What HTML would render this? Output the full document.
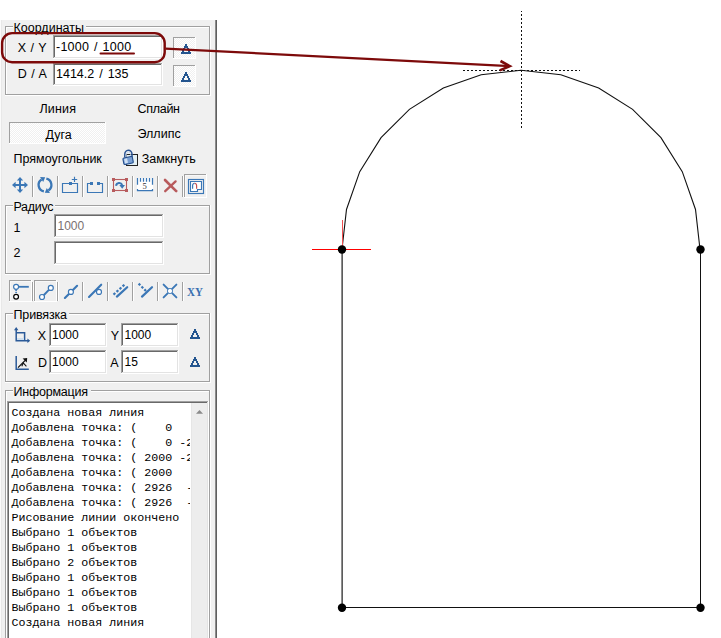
<!DOCTYPE html>
<html><head><meta charset="utf-8"><title>CAD</title>
<style>html,body{margin:0;padding:0;background:#fff;width:721px;height:638px;overflow:hidden;font-family:"Liberation Sans",sans-serif}</style>
</head><body>
<svg width="721" height="638" viewBox="0 0 721 638" style="display:block"><defs><pattern id="chk" x="0" y="0" width="2" height="2" patternUnits="userSpaceOnUse"><rect width="2" height="2" fill="#f0f0f0"/><rect width="1" height="1" fill="#fff"/><rect x="1" y="1" width="1" height="1" fill="#fff"/></pattern></defs>
<rect x="0" y="0" width="721" height="638" fill="#ffffff" />
<polyline points="342.00,249.30 346.49,209.47 359.73,171.63 381.05,137.70 409.40,109.35 443.33,88.03 481.17,74.79 521.00,70.30 560.83,74.79 598.67,88.03 632.60,109.35 660.95,137.70 682.27,171.63 695.51,209.47 700.00,249.30" fill="none" stroke="#111" stroke-width="1.1"/>
<line x1="342.5" y1="220" x2="342.5" y2="249" stroke="#f05050" stroke-width="1"/>
<line x1="312" y1="249.5" x2="371" y2="249.5" stroke="#ff0000" stroke-width="1"/>
<rect x="341" y="249" width="1" height="359" fill="#8e8e8e" />
<rect x="342" y="249" width="1" height="359" fill="#5c5c5c" />
<line x1="700.5" y1="249" x2="700.5" y2="607.5" stroke="#111" stroke-width="1"/>
<line x1="342" y1="607.5" x2="700.5" y2="607.5" stroke="#111" stroke-width="1"/>
<circle cx="342" cy="249.5" r="4.2" fill="#000"/>
<circle cx="700.5" cy="249.5" r="4.2" fill="#000"/>
<circle cx="342" cy="607.7" r="4.2" fill="#000"/>
<circle cx="700.5" cy="607.7" r="4.2" fill="#000"/>
<rect x="521" y="11" width="1" height="1" fill="#111" />
<rect x="521" y="14" width="1" height="2" fill="#111" />
<rect x="521" y="18" width="1" height="2" fill="#111" />
<rect x="521" y="22" width="1" height="2" fill="#111" />
<rect x="521" y="26" width="1" height="2" fill="#111" />
<rect x="521" y="30" width="1" height="2" fill="#111" />
<rect x="521" y="34" width="1" height="2" fill="#111" />
<rect x="521" y="38" width="1" height="2" fill="#111" />
<rect x="521" y="42" width="1" height="2" fill="#111" />
<rect x="521" y="46" width="1" height="2" fill="#111" />
<rect x="521" y="50" width="1" height="2" fill="#111" />
<rect x="521" y="54" width="1" height="2" fill="#111" />
<rect x="521" y="58" width="1" height="2" fill="#111" />
<rect x="521" y="62" width="1" height="2" fill="#111" />
<rect x="521" y="66" width="1" height="2" fill="#111" />
<rect x="521" y="70" width="1" height="2" fill="#111" />
<rect x="521" y="74" width="1" height="2" fill="#111" />
<rect x="521" y="78" width="1" height="2" fill="#111" />
<rect x="521" y="82" width="1" height="2" fill="#111" />
<rect x="521" y="86" width="1" height="2" fill="#111" />
<rect x="521" y="90" width="1" height="2" fill="#111" />
<rect x="521" y="94" width="1" height="2" fill="#111" />
<rect x="521" y="98" width="1" height="2" fill="#111" />
<rect x="521" y="102" width="1" height="2" fill="#111" />
<rect x="521" y="106" width="1" height="2" fill="#111" />
<rect x="521" y="110" width="1" height="2" fill="#111" />
<rect x="521" y="114" width="1" height="2" fill="#111" />
<rect x="521" y="118" width="1" height="2" fill="#111" />
<rect x="521" y="122" width="1" height="2" fill="#111" />
<rect x="521" y="126" width="1" height="2" fill="#111" />
<rect x="463" y="70" width="2" height="1" fill="#111" />
<rect x="467" y="70" width="2" height="1" fill="#111" />
<rect x="471" y="70" width="2" height="1" fill="#111" />
<rect x="475" y="70" width="2" height="1" fill="#111" />
<rect x="479" y="70" width="2" height="1" fill="#111" />
<rect x="483" y="70" width="2" height="1" fill="#111" />
<rect x="487" y="70" width="2" height="1" fill="#111" />
<rect x="491" y="70" width="2" height="1" fill="#111" />
<rect x="495" y="70" width="2" height="1" fill="#111" />
<rect x="499" y="70" width="2" height="1" fill="#111" />
<rect x="503" y="70" width="2" height="1" fill="#111" />
<rect x="507" y="70" width="2" height="1" fill="#111" />
<rect x="511" y="70" width="2" height="1" fill="#111" />
<rect x="515" y="70" width="2" height="1" fill="#111" />
<rect x="519" y="70" width="2" height="1" fill="#111" />
<rect x="523" y="70" width="2" height="1" fill="#111" />
<rect x="527" y="70" width="2" height="1" fill="#111" />
<rect x="531" y="70" width="2" height="1" fill="#111" />
<rect x="535" y="70" width="2" height="1" fill="#111" />
<rect x="539" y="70" width="2" height="1" fill="#111" />
<rect x="543" y="70" width="2" height="1" fill="#111" />
<rect x="547" y="70" width="2" height="1" fill="#111" />
<rect x="551" y="70" width="2" height="1" fill="#111" />
<rect x="555" y="70" width="2" height="1" fill="#111" />
<rect x="559" y="70" width="2" height="1" fill="#111" />
<rect x="563" y="70" width="2" height="1" fill="#111" />
<rect x="567" y="70" width="2" height="1" fill="#111" />
<rect x="571" y="70" width="2" height="1" fill="#111" />
<rect x="575" y="70" width="2" height="1" fill="#111" />
<rect x="579" y="70" width="1" height="1" fill="#111" />
<rect x="0" y="20" width="216" height="618" fill="#f0f0f0" />
<rect x="0" y="20" width="1" height="619" fill="#fbfbfb" />
<rect x="1" y="20" width="1" height="619" fill="#e8e8e8" />
<rect x="215" y="20" width="1" height="619" fill="#8c8c8c" />
<rect x="216" y="20" width="1" height="619" fill="#5f5f5f" />
<rect x="5" y="26" width="205" height="1" fill="#a0a0a0" />
<rect x="6" y="27" width="205" height="1" fill="#ffffff" />
<rect x="5" y="26" width="1" height="69" fill="#a0a0a0" />
<rect x="6" y="27" width="1" height="68" fill="#ffffff" />
<rect x="5" y="94" width="205" height="1" fill="#a0a0a0" />
<rect x="5" y="95" width="206" height="1" fill="#ffffff" />
<rect x="209" y="26" width="1" height="69" fill="#a0a0a0" />
<rect x="210" y="26" width="1" height="70" fill="#ffffff" />
<rect x="13" y="26" width="73" height="2" fill="#f0f0f0" />
<text x="13.5" y="31.5" font-family="Liberation Sans" font-size="12.5" fill="#000" >Координаты</text>
<text x="17.8" y="52" font-family="Liberation Sans" font-size="12.5" fill="#000" word-spacing="1">X / Y</text>
<rect x="53" y="35" width="110" height="24" fill="#ffffff" />
<rect x="53" y="35" width="110" height="1" fill="#a0a0a0" />
<rect x="53" y="35" width="1" height="24" fill="#a0a0a0" />
<rect x="54" y="36" width="108" height="1" fill="#696969" />
<rect x="54" y="36" width="1" height="22" fill="#696969" />
<rect x="53" y="58" width="110" height="1" fill="#ffffff" />
<rect x="162" y="35" width="1" height="24" fill="#ffffff" />
<rect x="54" y="57" width="108" height="1" fill="#e3e3e3" />
<rect x="161" y="36" width="1" height="22" fill="#e3e3e3" />
<text x="56" y="50.6" font-family="Liberation Sans" font-size="12.5" fill="#000" word-spacing="1.1" letter-spacing="0.25">-1000 / 1000</text>
<text x="17.8" y="78" font-family="Liberation Sans" font-size="12.5" fill="#000" word-spacing="1">D / A</text>
<rect x="53" y="63" width="110" height="23" fill="#ffffff" />
<rect x="53" y="63" width="110" height="1" fill="#a0a0a0" />
<rect x="53" y="63" width="1" height="23" fill="#a0a0a0" />
<rect x="54" y="64" width="108" height="1" fill="#696969" />
<rect x="54" y="64" width="1" height="21" fill="#696969" />
<rect x="53" y="85" width="110" height="1" fill="#ffffff" />
<rect x="162" y="63" width="1" height="23" fill="#ffffff" />
<rect x="54" y="84" width="108" height="1" fill="#e3e3e3" />
<rect x="161" y="64" width="1" height="21" fill="#e3e3e3" />
<text x="56" y="77.5" font-family="Liberation Sans" font-size="12.5" fill="#000" word-spacing="1.5">1414.2 / 135</text>
<rect x="173" y="37" width="23" height="22" fill="url(#chk)" />
<rect x="173" y="37" width="23" height="1" fill="#a0a0a0" />
<rect x="173" y="37" width="1" height="22" fill="#a0a0a0" />
<rect x="173" y="58" width="23" height="1" fill="#ffffff" />
<rect x="195" y="37" width="1" height="22" fill="#ffffff" />
<rect x="173" y="65" width="23" height="22" fill="url(#chk)" />
<rect x="173" y="65" width="23" height="1" fill="#a0a0a0" />
<rect x="173" y="65" width="1" height="22" fill="#a0a0a0" />
<rect x="173" y="86" width="23" height="1" fill="#ffffff" />
<rect x="195" y="65" width="1" height="22" fill="#ffffff" />
<rect x="185" y="44" width="2" height="2" fill="#24558f" />
<rect x="184" y="46" width="4" height="2" fill="#24558f" />
<rect x="183" y="48" width="2" height="2" fill="#24558f" />
<rect x="187" y="48" width="2" height="2" fill="#24558f" />
<rect x="182" y="50" width="2" height="2" fill="#24558f" />
<rect x="188" y="50" width="2" height="2" fill="#24558f" />
<rect x="181" y="52" width="10" height="2" fill="#24558f" />
<rect x="185" y="72" width="2" height="2" fill="#24558f" />
<rect x="184" y="74" width="4" height="2" fill="#24558f" />
<rect x="183" y="76" width="2" height="2" fill="#24558f" />
<rect x="187" y="76" width="2" height="2" fill="#24558f" />
<rect x="182" y="78" width="2" height="2" fill="#24558f" />
<rect x="188" y="78" width="2" height="2" fill="#24558f" />
<rect x="181" y="80" width="10" height="2" fill="#24558f" />
<text x="39.4" y="112.5" font-family="Liberation Sans" font-size="12.5" fill="#000" letter-spacing="0.2">Линия</text>
<text x="137.5" y="112.8" font-family="Liberation Sans" font-size="12.5" fill="#000" letter-spacing="-0.28">Сплайн</text>
<rect x="9" y="122" width="97" height="22" fill="url(#chk)" />
<rect x="9" y="122" width="97" height="1" fill="#a0a0a0" />
<rect x="9" y="122" width="1" height="22" fill="#a0a0a0" />
<rect x="9" y="143" width="97" height="1" fill="#ffffff" />
<rect x="105" y="122" width="1" height="22" fill="#ffffff" />
<text x="45.5" y="138.5" font-family="Liberation Sans" font-size="12.5" fill="#000" >Дуга</text>
<text x="137.5" y="138" font-family="Liberation Sans" font-size="12.5" fill="#000" >Эллипс</text>
<text x="13.5" y="163" font-family="Liberation Sans" font-size="12.5" fill="#000" >Прямоугольник</text>
<text x="141.7" y="162.8" font-family="Liberation Sans" font-size="12.5" fill="#000" >Замкнуть</text>
<g><rect x="126.5" y="154.5" width="11" height="11" fill="#e4f0f4" stroke="#222" stroke-width="1"/><path d="M124.8,157.5 V154.3 A3.6,3.9 0 0 1 132,154 V157" fill="none" stroke="#2a5494" stroke-width="1.5"/><path d="M126.3,157.5 V154.5 A2.1,2.4 0 0 1 130.5,154.5 V157" fill="none" stroke="#c8daf0" stroke-width="0.9"/><g transform="rotate(-12 128 160.5)"><rect x="123.3" y="157.2" width="9.6" height="6.6" rx="1.2" fill="#7aa0d4" stroke="#234d8c" stroke-width="1.1"/><rect x="124.5" y="158.2" width="3" height="4.6" fill="#cfe0f4"/></g></g>
<rect x="32" y="176" width="1" height="21" fill="#a0a0a0" />
<rect x="33" y="176" width="1" height="21" fill="#ffffff" />
<rect x="57" y="176" width="1" height="21" fill="#a0a0a0" />
<rect x="58" y="176" width="1" height="21" fill="#ffffff" />
<rect x="82" y="176" width="1" height="21" fill="#a0a0a0" />
<rect x="83" y="176" width="1" height="21" fill="#ffffff" />
<rect x="107" y="176" width="1" height="21" fill="#a0a0a0" />
<rect x="108" y="176" width="1" height="21" fill="#ffffff" />
<rect x="132" y="176" width="1" height="21" fill="#a0a0a0" />
<rect x="133" y="176" width="1" height="21" fill="#ffffff" />
<rect x="157" y="176" width="1" height="21" fill="#a0a0a0" />
<rect x="158" y="176" width="1" height="21" fill="#ffffff" />
<rect x="182" y="176" width="1" height="21" fill="#a0a0a0" />
<rect x="183" y="176" width="1" height="21" fill="#ffffff" />
<g fill="#3b77b6"><rect x="19" y="179" width="2" height="12"/><rect x="14" y="184" width="12" height="2"/><path d="M20,177 L23.2,180.6 L16.8,180.6 Z M20,193 L23.2,189.4 L16.8,189.4 Z M12,185 L15.6,181.8 L15.6,188.2 Z M28,185 L24.4,181.8 L24.4,188.2 Z"/></g>
<g fill="none" stroke="#3b77b6" stroke-width="2.3"><path d="M43.89,191.30 A6.4,6.4 0 0 1 41.61,179.57"/><path d="M46.33,178.74 A6.4,6.4 0 0 1 48.39,190.43"/></g>
<path d="M40.02,177.03 L45.17,177.35 L43.20,182.12 Z M49.98,192.97 L44.83,192.65 L46.80,187.88 Z" fill="#3b77b6"/>
<g fill="none" stroke="#3b77b6" stroke-width="1.15"><path d="M62.5,183.5 H77.5 V192.5 H62.5 Z"/><path d="M74.5,176.8 V182 M71.8,179.5 H77.2"/></g>
<rect x="69" y="182" width="3" height="3" fill="#3b77b6"/>
<g fill="none" stroke="#3b77b6" stroke-width="1.15"><path d="M91,183.5 H87.5 V192.5 H102.5 V183.5 H99"/></g>
<rect x="90" y="182" width="3" height="3" fill="#3b77b6"/><rect x="97" y="182" width="3" height="3" fill="#3b77b6"/>
<g><rect x="113.5" y="179.5" width="13" height="11" fill="none" stroke="#b85c5e" stroke-width="1.1"/><rect x="112" y="178" width="3" height="3" fill="#b85c5e"/><rect x="125" y="178" width="3" height="3" fill="#b85c5e"/><rect x="112" y="189" width="3" height="3" fill="#b85c5e"/><rect x="125" y="189" width="3" height="3" fill="#b85c5e"/><path d="M116,185.8 A3.3,3.6 0 0 1 122.2,185" fill="none" stroke="#3b77b6" stroke-width="2.1"/><path d="M119.3,185 L125,185 L122.2,188.8 Z" fill="#3b77b6"/></g>
<g><rect x="137" y="178" width="16" height="13" fill="#fff"/><path d="M137.5,178 V184.8 M140.5,178 V181.8 M143.5,178 V181.8 M146.5,178 V181.8 M149.5,178 V181.8 M152.5,178 V184.8 M137.5,189 V190.5 H152.5 V189" fill="none" stroke="#3b77b6" stroke-width="1.25"/><text x="142.6" y="189" font-family="Liberation Serif" font-size="8.6" fill="#333">5</text></g>
<path d="M165,180 L176.2,191.2" stroke="#b85a5c" stroke-width="2.6" stroke-linecap="round"/><path d="M175.6,181.4 L165.2,191.2" stroke="#b85a5c" stroke-width="2.3" stroke-linecap="round"/>
<rect x="184" y="174" width="23" height="24" fill="#f0f0f0" />
<rect x="184" y="174" width="23" height="1" fill="#a0a0a0" />
<rect x="184" y="174" width="1" height="24" fill="#a0a0a0" />
<rect x="185" y="175" width="21" height="1" fill="#f8f8f8" />
<rect x="185" y="175" width="1" height="22" fill="#f8f8f8" />
<rect x="184" y="197" width="23" height="1" fill="#ffffff" />
<rect x="206" y="174" width="1" height="24" fill="#ffffff" />
<g><rect x="188.5" y="179.5" width="15" height="14" fill="none" stroke="#3b77b6" stroke-width="1.15"/><path d="M190.5,181.5 H201.5 V189.5 H197.5 V191.5 H190.5 Z" fill="#fff" stroke="#3b77b6" stroke-width="1.15"/><path d="M192.6,188.8 V185.5 A2,2.2 0 0 1 194.6,183.3" fill="none" stroke="#3b77b6" stroke-width="1.2"/><path d="M194.6,183.3 A2,2.2 0 0 1 196.6,185.5 V188.8" fill="none" stroke="#c85050" stroke-width="1.2"/></g>
<rect x="5" y="205" width="205" height="1" fill="#a0a0a0" />
<rect x="6" y="206" width="205" height="1" fill="#ffffff" />
<rect x="5" y="205" width="1" height="69" fill="#a0a0a0" />
<rect x="6" y="206" width="1" height="68" fill="#ffffff" />
<rect x="5" y="273" width="205" height="1" fill="#a0a0a0" />
<rect x="5" y="274" width="206" height="1" fill="#ffffff" />
<rect x="209" y="205" width="1" height="69" fill="#a0a0a0" />
<rect x="210" y="205" width="1" height="70" fill="#ffffff" />
<rect x="13" y="205" width="42" height="2" fill="#f0f0f0" />
<text x="13.5" y="210.6" font-family="Liberation Sans" font-size="12.5" fill="#000" letter-spacing="-0.3">Радиус</text>
<text x="13.5" y="231.7" font-family="Liberation Sans" font-size="12.5" fill="#000" >1</text>
<rect x="54" y="214" width="110" height="24" fill="#ffffff" />
<rect x="54" y="214" width="110" height="1" fill="#a0a0a0" />
<rect x="54" y="214" width="1" height="24" fill="#a0a0a0" />
<rect x="55" y="215" width="108" height="1" fill="#696969" />
<rect x="55" y="215" width="1" height="22" fill="#696969" />
<rect x="54" y="237" width="110" height="1" fill="#ffffff" />
<rect x="163" y="214" width="1" height="24" fill="#ffffff" />
<rect x="55" y="236" width="108" height="1" fill="#e3e3e3" />
<rect x="162" y="215" width="1" height="22" fill="#e3e3e3" />
<text x="57.5" y="229.8" font-family="Liberation Sans" font-size="12" fill="#7a7070" >1000</text>
<text x="13.5" y="256.8" font-family="Liberation Sans" font-size="12.5" fill="#000" >2</text>
<rect x="54" y="241" width="110" height="24" fill="#ffffff" />
<rect x="54" y="241" width="110" height="1" fill="#a0a0a0" />
<rect x="54" y="241" width="1" height="24" fill="#a0a0a0" />
<rect x="55" y="242" width="108" height="1" fill="#696969" />
<rect x="55" y="242" width="1" height="22" fill="#696969" />
<rect x="54" y="264" width="110" height="1" fill="#ffffff" />
<rect x="163" y="241" width="1" height="24" fill="#ffffff" />
<rect x="55" y="263" width="108" height="1" fill="#e3e3e3" />
<rect x="162" y="242" width="1" height="22" fill="#e3e3e3" />
<rect x="9" y="280" width="23" height="22" fill="#f0f0f0" />
<rect x="9" y="280" width="23" height="1" fill="#a0a0a0" />
<rect x="9" y="280" width="1" height="22" fill="#a0a0a0" />
<rect x="10" y="281" width="21" height="1" fill="#f8f8f8" />
<rect x="10" y="281" width="1" height="20" fill="#f8f8f8" />
<rect x="9" y="301" width="23" height="1" fill="#ffffff" />
<rect x="31" y="280" width="1" height="22" fill="#ffffff" />
<rect x="34" y="280" width="23" height="22" fill="#f0f0f0" />
<rect x="34" y="280" width="23" height="1" fill="#a0a0a0" />
<rect x="34" y="280" width="1" height="22" fill="#a0a0a0" />
<rect x="35" y="281" width="21" height="1" fill="#f8f8f8" />
<rect x="35" y="281" width="1" height="20" fill="#f8f8f8" />
<rect x="34" y="301" width="23" height="1" fill="#ffffff" />
<rect x="56" y="280" width="1" height="22" fill="#ffffff" />
<rect x="32" y="282" width="1" height="19" fill="#a0a0a0" />
<rect x="33" y="282" width="1" height="19" fill="#ffffff" />
<rect x="57" y="282" width="1" height="19" fill="#a0a0a0" />
<rect x="58" y="282" width="1" height="19" fill="#ffffff" />
<rect x="82" y="282" width="1" height="19" fill="#a0a0a0" />
<rect x="83" y="282" width="1" height="19" fill="#ffffff" />
<rect x="107" y="282" width="1" height="19" fill="#a0a0a0" />
<rect x="108" y="282" width="1" height="19" fill="#ffffff" />
<rect x="132" y="282" width="1" height="19" fill="#a0a0a0" />
<rect x="133" y="282" width="1" height="19" fill="#ffffff" />
<rect x="157" y="282" width="1" height="19" fill="#a0a0a0" />
<rect x="158" y="282" width="1" height="19" fill="#ffffff" />
<rect x="182" y="282" width="1" height="19" fill="#a0a0a0" />
<rect x="183" y="282" width="1" height="19" fill="#ffffff" />
<g><path d="M18.5,286.8 H28.8" stroke="#3b77b6" stroke-width="1.8"/><rect x="15.3" y="289.6" width="1.6" height="1.4" fill="#3b77b6"/><rect x="15.3" y="291.8" width="1.6" height="1.2" fill="#3b77b6"/><circle cx="16.1" cy="286.8" r="2.5" fill="#fff" stroke="#3b77b6" stroke-width="1.2"/><circle cx="16.1" cy="296.7" r="2.4" fill="#fff" stroke="#000" stroke-width="1.2"/></g>
<g><path d="M42,297 L50.8,287.9" stroke="#3b77b6" stroke-width="1.9"/><circle cx="42" cy="297" r="2.5" fill="#fff" stroke="#3b77b6" stroke-width="1.2"/><circle cx="50.8" cy="287.9" r="2.5" fill="#fff" stroke="#3b77b6" stroke-width="1.2"/></g>
<g><path d="M64.9,298 L77.1,285.8" stroke="#3b77b6" stroke-width="2.1" stroke-linecap="round"/><circle cx="70.9" cy="291.9" r="2.5" fill="#fff" stroke="#3b77b6" stroke-width="1.15"/></g>
<g><path d="M89,297 L101.2,284.7" stroke="#3b77b6" stroke-width="2.1" stroke-linecap="round"/><circle cx="99" cy="291.9" r="2.5" fill="#fff" stroke="#3b77b6" stroke-width="1.15"/></g>
<g><path d="M113.5,294.6 L124.5,284.6" stroke="#3b77b6" stroke-width="2.2" stroke-dasharray="2.4 1.7"/><path d="M116.9,296.6 L127.2,287.2" stroke="#3b77b6" stroke-width="2.2" stroke-linecap="round"/></g>
<g><path d="M138.6,283.6 L146,291" stroke="#3b77b6" stroke-width="2.2" stroke-dasharray="2.4 1.7"/><path d="M142,296.6 L152,287.2" stroke="#3b77b6" stroke-width="2.2" stroke-linecap="round"/></g>
<g><path d="M163.6,284.6 L176.4,297.4 M176.4,284.6 L163.6,297.4" stroke="#3b77b6" stroke-width="1.9" stroke-linecap="round"/><circle cx="170" cy="291" r="2.6" fill="#fff" stroke="#3b77b6" stroke-width="0.9"/></g>
<text x="187" y="296.3" font-family="Liberation Serif" font-size="11.5" fill="#3a70b0" font-weight="bold" textLength="16" lengthAdjust="spacingAndGlyphs">XY</text>
<rect x="5" y="313" width="205" height="1" fill="#a0a0a0" />
<rect x="6" y="314" width="205" height="1" fill="#ffffff" />
<rect x="5" y="313" width="1" height="69" fill="#a0a0a0" />
<rect x="6" y="314" width="1" height="68" fill="#ffffff" />
<rect x="5" y="381" width="205" height="1" fill="#a0a0a0" />
<rect x="5" y="382" width="206" height="1" fill="#ffffff" />
<rect x="209" y="313" width="1" height="69" fill="#a0a0a0" />
<rect x="210" y="313" width="1" height="70" fill="#ffffff" />
<rect x="13" y="313" width="56" height="2" fill="#f0f0f0" />
<text x="13.5" y="318.8" font-family="Liberation Sans" font-size="12.5" fill="#000" letter-spacing="-0.15">Привязка</text>
<g fill="none" stroke="#2b5a98" stroke-width="1.5"><path d="M16.2,329 V340.8 H28.5"/><path d="M16.2,332.8 H24.6 V340.8"/></g>
<rect x="17" y="338" width="7" height="2" fill="#cfe0f0"/>
<path d="M14,330.2 L16.2,327 L18.4,330.2 Z M27.4,338.6 L30.2,340.8 L27.4,343 Z" fill="#2b5a98"/>
<text x="37.8" y="340" font-family="Liberation Sans" font-size="12.5" fill="#000" >X</text>
<rect x="49" y="323" width="58" height="24" fill="#ffffff" />
<rect x="49" y="323" width="58" height="1" fill="#a0a0a0" />
<rect x="49" y="323" width="1" height="24" fill="#a0a0a0" />
<rect x="50" y="324" width="56" height="1" fill="#696969" />
<rect x="50" y="324" width="1" height="22" fill="#696969" />
<rect x="49" y="346" width="58" height="1" fill="#ffffff" />
<rect x="106" y="323" width="1" height="24" fill="#ffffff" />
<rect x="50" y="345" width="56" height="1" fill="#e3e3e3" />
<rect x="105" y="324" width="1" height="22" fill="#e3e3e3" />
<text x="52" y="339" font-family="Liberation Sans" font-size="12" fill="#000" >1000</text>
<text x="110.8" y="339.5" font-family="Liberation Sans" font-size="12.5" fill="#000" >Y</text>
<rect x="121" y="323" width="58" height="24" fill="#ffffff" />
<rect x="121" y="323" width="58" height="1" fill="#a0a0a0" />
<rect x="121" y="323" width="1" height="24" fill="#a0a0a0" />
<rect x="122" y="324" width="56" height="1" fill="#696969" />
<rect x="122" y="324" width="1" height="22" fill="#696969" />
<rect x="121" y="346" width="58" height="1" fill="#ffffff" />
<rect x="178" y="323" width="1" height="24" fill="#ffffff" />
<rect x="122" y="345" width="56" height="1" fill="#e3e3e3" />
<rect x="177" y="324" width="1" height="22" fill="#e3e3e3" />
<text x="124.5" y="339" font-family="Liberation Sans" font-size="12" fill="#000" >1000</text>
<g fill="none" stroke="#2b5a98" stroke-width="1.5"><path d="M16.2,356 V369.2 H28.8"/></g>
<path d="M18,367.6 L25.2,360.4" stroke="#111" stroke-width="1.3"/><path d="M22.6,358.6 L27.2,358 L26.8,362.6 Z" fill="#111"/><path d="M21.8,366.2 L23.3,363 L26.4,366.4" fill="none" stroke="#111" stroke-width="1.1"/>
<text x="38" y="367" font-family="Liberation Sans" font-size="12.5" fill="#000" >D</text>
<rect x="49" y="350" width="58" height="24" fill="#ffffff" />
<rect x="49" y="350" width="58" height="1" fill="#a0a0a0" />
<rect x="49" y="350" width="1" height="24" fill="#a0a0a0" />
<rect x="50" y="351" width="56" height="1" fill="#696969" />
<rect x="50" y="351" width="1" height="22" fill="#696969" />
<rect x="49" y="373" width="58" height="1" fill="#ffffff" />
<rect x="106" y="350" width="1" height="24" fill="#ffffff" />
<rect x="50" y="372" width="56" height="1" fill="#e3e3e3" />
<rect x="105" y="351" width="1" height="22" fill="#e3e3e3" />
<text x="52" y="366" font-family="Liberation Sans" font-size="12" fill="#000" >1000</text>
<text x="110.3" y="366.5" font-family="Liberation Sans" font-size="12.5" fill="#000" >A</text>
<rect x="121" y="350" width="58" height="24" fill="#ffffff" />
<rect x="121" y="350" width="58" height="1" fill="#a0a0a0" />
<rect x="121" y="350" width="1" height="24" fill="#a0a0a0" />
<rect x="122" y="351" width="56" height="1" fill="#696969" />
<rect x="122" y="351" width="1" height="22" fill="#696969" />
<rect x="121" y="373" width="58" height="1" fill="#ffffff" />
<rect x="178" y="350" width="1" height="24" fill="#ffffff" />
<rect x="122" y="372" width="56" height="1" fill="#e3e3e3" />
<rect x="177" y="351" width="1" height="22" fill="#e3e3e3" />
<text x="124.5" y="366" font-family="Liberation Sans" font-size="12" fill="#000" >15</text>
<rect x="194" y="329" width="2" height="2" fill="#24558f" />
<rect x="193" y="331" width="4" height="2" fill="#24558f" />
<rect x="192" y="333" width="2" height="2" fill="#24558f" />
<rect x="196" y="333" width="2" height="2" fill="#24558f" />
<rect x="191" y="335" width="2" height="2" fill="#24558f" />
<rect x="197" y="335" width="2" height="2" fill="#24558f" />
<rect x="190" y="337" width="10" height="2" fill="#24558f" />
<rect x="194" y="357" width="2" height="2" fill="#24558f" />
<rect x="193" y="359" width="4" height="2" fill="#24558f" />
<rect x="192" y="361" width="2" height="2" fill="#24558f" />
<rect x="196" y="361" width="2" height="2" fill="#24558f" />
<rect x="191" y="363" width="2" height="2" fill="#24558f" />
<rect x="197" y="363" width="2" height="2" fill="#24558f" />
<rect x="190" y="365" width="10" height="2" fill="#24558f" />
<rect x="5" y="390" width="205" height="1" fill="#a0a0a0" />
<rect x="6" y="391" width="205" height="1" fill="#ffffff" />
<rect x="5" y="390" width="1" height="254" fill="#a0a0a0" />
<rect x="6" y="391" width="1" height="253" fill="#ffffff" />
<rect x="209" y="390" width="1" height="254" fill="#a0a0a0" />
<rect x="210" y="390" width="1" height="255" fill="#ffffff" />
<rect x="13" y="390" width="78" height="2" fill="#f0f0f0" />
<text x="13.5" y="395.6" font-family="Liberation Sans" font-size="12.5" fill="#000" letter-spacing="-0.22">Информация</text>
<rect x="7" y="401" width="202" height="237" fill="#ffffff" />
<rect x="7" y="401" width="202" height="1" fill="#a0a0a0" />
<rect x="7" y="401" width="1" height="238" fill="#a0a0a0" />
<rect x="8" y="402" width="200" height="1" fill="#696969" />
<rect x="8" y="402" width="1" height="237" fill="#696969" />
<rect x="208" y="401" width="1" height="238" fill="#ffffff" />
<rect x="207" y="402" width="1" height="237" fill="#e3e3e3" />
<rect x="191" y="403" width="16" height="235" fill="#ededed" />
<rect x="191" y="403" width="1" height="236" fill="#e6e6e6" />
<path d="M196,413.8 L199.5,410 L203,413.8 Z" fill="#8a8a8a"/>
<clipPath id="mc"><rect x="9" y="403" width="181" height="240"/></clipPath><g clip-path="url(#mc)">
<text x="11.4" y="416" font-family="Liberation Mono" font-size="11.67" fill="#000" xml:space="preserve">Создана&#160;новая&#160;линия</text>
<text x="11.4" y="431" font-family="Liberation Mono" font-size="11.67" fill="#000" xml:space="preserve">Добавлена&#160;точка:&#160;(&#160;&#160;&#160;&#160;0</text>
<text x="11.4" y="446" font-family="Liberation Mono" font-size="11.67" fill="#000" xml:space="preserve">Добавлена&#160;точка:&#160;(&#160;&#160;&#160;&#160;0&#160;-2</text>
<text x="11.4" y="461" font-family="Liberation Mono" font-size="11.67" fill="#000" xml:space="preserve">Добавлена&#160;точка:&#160;(&#160;2000&#160;-2</text>
<text x="11.4" y="476" font-family="Liberation Mono" font-size="11.67" fill="#000" xml:space="preserve">Добавлена&#160;точка:&#160;(&#160;2000</text>
<text x="11.4" y="491" font-family="Liberation Mono" font-size="11.67" fill="#000" xml:space="preserve">Добавлена&#160;точка:&#160;(&#160;2926&#160;&#160;-</text>
<text x="11.4" y="506" font-family="Liberation Mono" font-size="11.67" fill="#000" xml:space="preserve">Добавлена&#160;точка:&#160;(&#160;2926&#160;&#160;-</text>
<text x="11.4" y="521" font-family="Liberation Mono" font-size="11.67" fill="#000" xml:space="preserve">Рисование&#160;линии&#160;окончено</text>
<text x="11.4" y="536" font-family="Liberation Mono" font-size="11.67" fill="#000" xml:space="preserve">Выбрано&#160;1&#160;объектов</text>
<text x="11.4" y="551" font-family="Liberation Mono" font-size="11.67" fill="#000" xml:space="preserve">Выбрано&#160;1&#160;объектов</text>
<text x="11.4" y="566" font-family="Liberation Mono" font-size="11.67" fill="#000" xml:space="preserve">Выбрано&#160;2&#160;объектов</text>
<text x="11.4" y="581" font-family="Liberation Mono" font-size="11.67" fill="#000" xml:space="preserve">Выбрано&#160;1&#160;объектов</text>
<text x="11.4" y="596" font-family="Liberation Mono" font-size="11.67" fill="#000" xml:space="preserve">Выбрано&#160;1&#160;объектов</text>
<text x="11.4" y="611" font-family="Liberation Mono" font-size="11.67" fill="#000" xml:space="preserve">Выбрано&#160;1&#160;объектов</text>
<text x="11.4" y="626" font-family="Liberation Mono" font-size="11.67" fill="#000" xml:space="preserve">Создана&#160;новая&#160;линия</text>
</g>
<rect x="2.1" y="33.1" width="162.6" height="29.1" rx="10" ry="10" fill="none" stroke="#7d0a0a" stroke-width="2.4"/>
<path d="M100.5,53.6 L134,53.6" stroke="#7d0a0a" stroke-width="2" stroke-linecap="round"/>
<path d="M165.5,48.6 L510,66.1" stroke="#7d0a0a" stroke-width="2.2"/>
<path d="M500.5,61 L509.8,66.2 L499.7,70.4" fill="none" stroke="#7d0a0a" stroke-width="2.6" stroke-linejoin="miter" stroke-miterlimit="3"/></svg>
</body></html>
